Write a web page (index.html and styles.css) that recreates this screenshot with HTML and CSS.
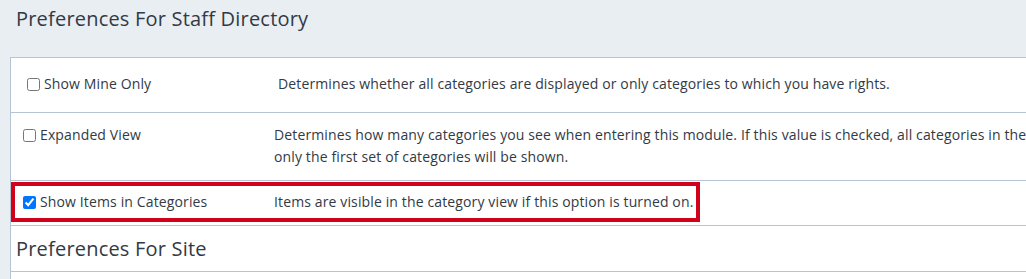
FILE: index.html
```html
<!DOCTYPE html>
<html lang="en">
<head>
<meta charset="utf-8">
<title>Preferences</title>
<link rel="stylesheet" href="styles.css">
</head>
<body>
<h1 class="page-title">Preferences For Staff Directory</h1>
<div class="card">
  <div class="row row-first">
    <label class="opt"><input type="checkbox" class="cb">Show Mine Only</label>
    <div class="desc">Determines whether all categories are displayed or only categories to which you have rights.</div>
  </div>
  <div class="row row-std">
    <label class="opt"><input type="checkbox" class="cb">Expanded View</label>
    <div class="desc">Determines how many categories you see when entering this module. If this value is checked, all categories in the<br>only the first set of categories will be shown.</div>
  </div>
  <div class="row row-hl">
    <div class="highlight">
      <label class="opt"><input type="checkbox" class="cb" checked>Show Items in Categories</label>
      <div class="desc">Items are visible in the category view if this option is turned on.</div>
    </div>
  </div>
  <h2 class="section-title">Preferences For Site</h2>
  <div class="row row-empty"></div>
</div>
</body>
</html>
```
FILE: styles.css
```css
html, body {
  margin: 0;
  padding: 0;
  background: #e9eef3;
  overflow: hidden;
}
body {
  font-family: "Open Sans", "Liberation Sans", sans-serif;
  color: #323a45;
  font-size: 14px;
  letter-spacing: 0.13px;
}
.page-title {
  margin: 0 0 24px 0;
  padding: 5px 16px 0 16px;
  font-size: 20px;
  line-height: 28px;
  font-weight: 400;
  letter-spacing: 0.2px;
}
.card {
  margin-left: 10px;
  background: #fff;
  border-left: 1px solid #b5c3d3;
  border-top: 1px solid #b5c3d3;
}
.row {
  border-bottom: 1px solid #b5c3d3;
  display: flex;
  line-height: 22px;
}
.opt {
  display: flex;
  align-items: center;
  width: 251px;
  flex: none;
  height: 22px;
}
.cb {
  margin: 0 4px 0 0;
  width: 13px;
  height: 13px;
}
.desc {
  flex: none;
  white-space: nowrap;
}
.row-first {
  padding: 15px 0 17px 16px;
}
.row-std {
  padding: 11px 0 12px 12px;
}
.row-hl {
  padding: 1px 0 3px 0;
}
.highlight {
  display: flex;
  border: 4px solid #d0021b;
  padding: 5px 3px 5px 8px;
}
.section-title {
  margin: 0;
  padding: 10px 5px;
  font-size: 20px;
  line-height: 25px;
  font-weight: 400;
  letter-spacing: 0.2px;
  border-bottom: 1px solid #b5c3d3;
}
.row-empty {
  height: 20px;
  border-bottom: none;
}
```
